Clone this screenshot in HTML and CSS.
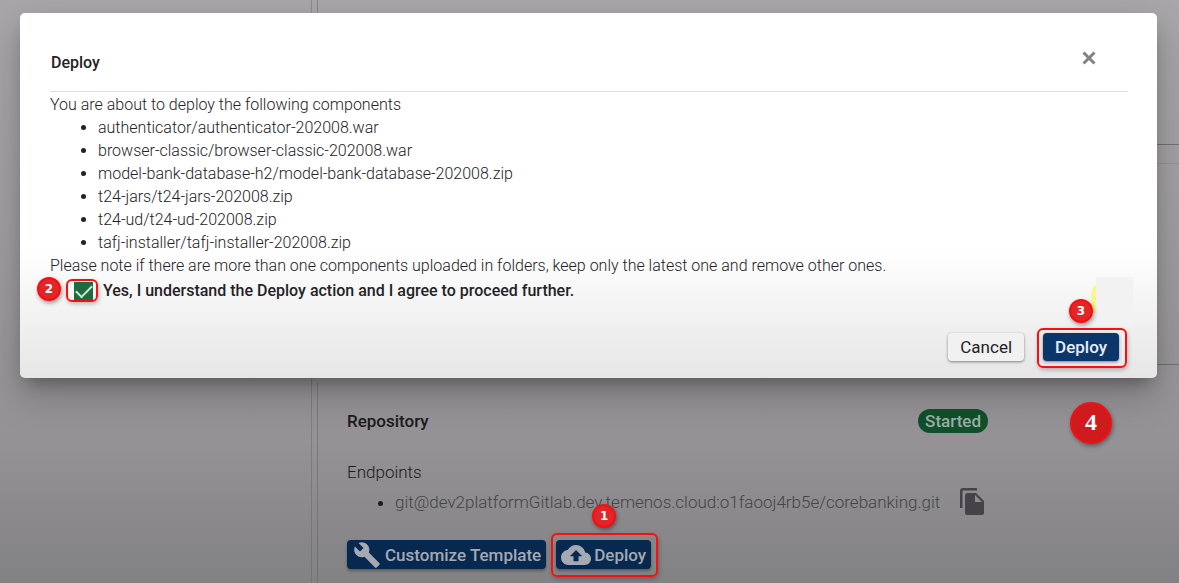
FILE: index.html
```html
<!DOCTYPE html>
<html lang="en">
<head>
<meta charset="utf-8">
<title>Deploy</title>
<link rel="stylesheet" href="styles.css">
</head>
<body>
<div class="page">
  <aside class="sidebar"></aside>
  <main class="main">
    <section class="card card-first"></section>
    <section class="card card-second"></section>
    <section class="card card-repository">
      <div class="repository">
        <header class="repository-head">
          <h2 class="repository-title">Repository</h2>
          <span class="status">Started</span>
        </header>
        <p class="endpoints-label">Endpoints</p>
        <ul class="endpoints">
          <li>
            <div class="endpoint">
              <span>git@dev2platformGitlab.dev.temenos.cloud:o1faooj4rb5e/corebanking.git</span>
              <button class="copy" type="button" aria-label="Copy">
                <svg width="24" height="28" viewBox="0 0 24 28"><path d="M17 0H3Q0 0 0 3V20H2.500V2.500H17Z"/><path d="M8 5h8l8 8v12q0 2-2 2H7q-2 0-2-2V8q0-3 3-3zm7 2v7h7z" fill-rule="evenodd"/></svg>
              </button>
            </div>
          </li>
        </ul>
        <div class="actions">
          <button class="action" type="button">
            <svg class="wrench" width="30" height="28" viewBox="0 0 24 24"><path d="M22.700 19l-9.100-9.100c.9-2.300.4-5-1.500-6.900-2-2-5-2.400-7.400-1.300L9 6 6 9 1.600 4.700C.4 7.100.9 10.100 2.900 12.100c1.900 1.900 4.600 2.400 6.900 1.500l9.100 9.100c.4.4 1 .4 1.400 0l2.300-2.300c.5-.4.5-1.100.1-1.400z"/></svg>
            Customize Template
          </button>
          <div class="marked">
            <button class="action" type="button">
              <svg width="30" height="30" viewBox="0 0 24 24"><path d="M19.350 10.040C18.670 6.590 15.640 4 12 4 9.110 4 6.600 5.640 5.350 8.040 2.340 8.360 0 10.910 0 14c0 3.310 2.690 6 6 6h13c2.760 0 5-2.240 5-5 0-2.640-2.050-4.780-4.650-4.960zM14 13v4h-4v-4H7l5-5 5 5h-3z"/></svg>
              Deploy
            </button>
            <span class="frame frame-upload"></span>
            <span class="badge badge-one">1</span>
          </div>
        </div>
      </div>
    </section>
  </main>
</div>

<div class="dialog" role="dialog" aria-labelledby="dialog-title">
  <header class="dialog-head">
    <h1 class="dialog-title" id="dialog-title">Deploy</h1>
    <button class="close" type="button" aria-label="Close">
      <svg width="14" height="14" viewBox="0 0 14 14"><path d="M1.500 1.500l11 11M12.500 1.500l-11 11"/></svg>
    </button>
  </header>
  <div class="dialog-body">
    <p>You are about to deploy the following components</p>
    <ul class="components">
      <li>authenticator/authenticator-202008.war</li>
      <li>browser-classic/browser-classic-202008.war</li>
      <li>model-bank-database-h2/model-bank-database-202008.zip</li>
      <li>t24-jars/t24-jars-202008.zip</li>
      <li>t24-ud/t24-ud-202008.zip</li>
      <li>tafj-installer/tafj-installer-202008.zip</li>
    </ul>
    <p>Please note if there are more than one components uploaded in folders, keep only the latest one and remove other ones.</p>
  </div>
  <div class="consent">
    <span class="marked">
      <input class="check" type="checkbox" id="agree" checked>
      <span class="frame frame-check"></span>
      <span class="badge badge-two">2</span>
    </span>
    <label for="agree">Yes, I understand the Deploy action and I agree to proceed further.</label>
  </div>
  <footer class="dialog-foot">
    <button class="button" type="button">Cancel</button>
    <div class="marked">
      <span class="glow"></span>
      <span class="patch"></span>
      <button class="button button-primary" type="button">Deploy</button>
      <span class="frame frame-deploy"></span>
      <span class="badge badge-three">3</span>
      <span class="badge badge-four">4</span>
    </div>
  </footer>
</div>
</body>
</html>
```
FILE: styles.css
```css
* {
  box-sizing: border-box;
}

body {
  margin: 0;
  font-family: Roboto, "Liberation Sans", sans-serif;
  font-size: 17px;
  color: #1b1a1d;
}

h1, h2, p, ul {
  margin: 0;
}

button {
  font: inherit;
  border: 0;
  cursor: pointer;
}

/* Page under the dialog */
.page {
  display: grid;
  grid-template-columns: 312px 1fr;
  column-gap: 5px;
  min-height: 100vh;
  overflow: hidden;
  background: linear-gradient(#a9a7aa 0%, #a09ea1 40%, #949295 76%, #828183 100%);
}

.sidebar {
  border-right: 1px solid rgba(80, 75, 80, 0.3);
}

.main {
  display: flex;
  flex-direction: column;
  gap: 18px;
}

.card {
  border-left: 1px solid rgba(80, 75, 80, 0.35);
}

.card-first,
.card-second {
  border-bottom: 1px solid #727073;
}

.card-first {
  height: 145px;
}

.card-second {
  height: 202px;
  border-top: 1px solid #959396;
}

.card-repository {
  flex: 1;
  padding: 26px 29px 14px;
}

.repository {
  max-width: 641px;
}

.repository-head {
  display: flex;
  align-items: center;
  justify-content: space-between;
}

.repository-title {
  font-size: 17px;
  line-height: 24px;
  font-weight: 500;
}

.status {
  padding: 0 7px;
  border-radius: 12px;
  background: #10502c;
  color: #9fb0a5;
  font-weight: 500;
  line-height: 24px;
}

.endpoints-label {
  margin-top: 27px;
  font-weight: 300;
  line-height: 24px;
}

.endpoints {
  padding-left: 48px;
  font-weight: 300;
}

.endpoint {
  display: flex;
  align-items: center;
  gap: 20px;
  height: 36px;
  color: #454347;
}

.copy {
  display: flex;
  padding: 0;
  background: none;
  fill: #454347;
}

.actions {
  display: flex;
  gap: 10px;
  margin-top: 20px;
}

.action {
  display: flex;
  align-items: center;
  gap: 3px;
  height: 29px;
  padding: 0 5px;
  border-radius: 4px;
  background: #07284f;
  box-shadow: 0 2px 3px rgba(0, 0, 0, 0.3);
  color: #a5a9b2;
  font-weight: 500;
  fill: #a5a9b2;
}

.action svg {
  flex: none;
}

/* Dialog */
.dialog {
  position: absolute;
  top: 13px;
  left: 20px;
  right: 22px;
  padding: 32px 29px 17px 30px;
  border-radius: 5px;
  background: linear-gradient(#fff 0%, #fff 64%, #e6e6e6 100%);
  box-shadow: 0 11px 15px -7px rgba(0, 0, 0, 0.3), 0 16px 38px 3px rgba(0, 0, 0, 0.2);
  color: #232226;
}

.dialog-head {
  display: flex;
  justify-content: space-between;
  height: 47px;
  padding: 6px 32px 0 1px;
  border-bottom: 1px solid #dededf;
}

.dialog-title {
  font-size: 16px;
  line-height: 24px;
  font-weight: 500;
}

.close {
  display: flex;
  align-self: flex-start;
  padding: 0;
  background: none;
}

.close path {
  stroke: #828184;
  stroke-width: 3;
}

.dialog-body {
  padding-top: 1px;
  font-size: 16px;
  font-weight: 300;
  line-height: 23px;
}

.components {
  padding-left: 48px;
}

.consent {
  display: flex;
  align-items: center;
  gap: 10px;
  padding-left: 24px;
  margin-top: 2px;
  font-size: 16px;
  line-height: 24px;
  font-weight: 500;
}

.check {
  display: grid;
  place-items: center;
  appearance: none;
  width: 19px;
  height: 18px;
  margin: 0;
  background: #1f6b40;
}

.check::after {
  content: "";
  width: 14px;
  height: 7px;
  border: solid #c9e8d2;
  border-width: 0 0 2px 2px;
  transform: translateY(-2px) rotate(-45deg);
}

.dialog-foot {
  display: flex;
  justify-content: flex-end;
  gap: 19px;
  margin-top: 30px;
  padding-right: 9px;
}

.button {
  height: 28px;
  padding: 0 12px;
  border-radius: 4px;
  background: #f1f1f1;
  box-shadow: 0 1px 3px rgba(0, 0, 0, 0.45);
  color: #232226;
  line-height: 28px;
}

.button-primary {
  background: #0b3669;
  color: #e8edf3;
  font-weight: 500;
}

/* Step markers drawn over the controls */
.marked {
  position: relative;
}

.frame {
  position: absolute;
  border: 2px solid #fb0d10;
  border-radius: 6px;
  box-shadow: 1px 2px 4px rgba(0, 0, 0, 0.25);
  pointer-events: none;
}

.frame-upload {
  inset: -7px -7px -8px -5px;
}

.frame-check {
  inset: -3px -5px -2px -8px;
}

.frame-deploy {
  inset: -5px -8px -7px -6px;
}

.badge {
  position: absolute;
  width: 24px;
  height: 24px;
  border: 2px solid #f90d10;
  border-radius: 50%;
  background: #df2629;
  box-shadow: 1px 2px 4px rgba(0, 0, 0, 0.4);
  color: #fff;
  font-family: "DejaVu Sans", sans-serif;
  font-size: 12px;
  font-weight: 700;
  line-height: 20px;
  text-align: center;
}

.badge-one {
  top: -36px;
  left: 36px;
}

.badge-two {
  top: -5px;
  left: -37px;
}

.badge-three {
  top: -34px;
  left: 26px;
}

.badge-four {
  top: 69px;
  left: 27px;
  width: 42px;
  height: 42px;
  background: #cf1b1e;
  font-family: "Liberation Serif", serif;
  font-size: 24px;
  line-height: 36px;
}

.patch {
  position: absolute;
  top: -56px;
  right: -14px;
  width: 37px;
  height: 50px;
  background: #f2f2f2;
}

.glow {
  position: absolute;
  top: -48px;
  right: 18px;
  width: 10px;
  height: 28px;
  border-radius: 50%;
  background: #f7f78e;
}
```
